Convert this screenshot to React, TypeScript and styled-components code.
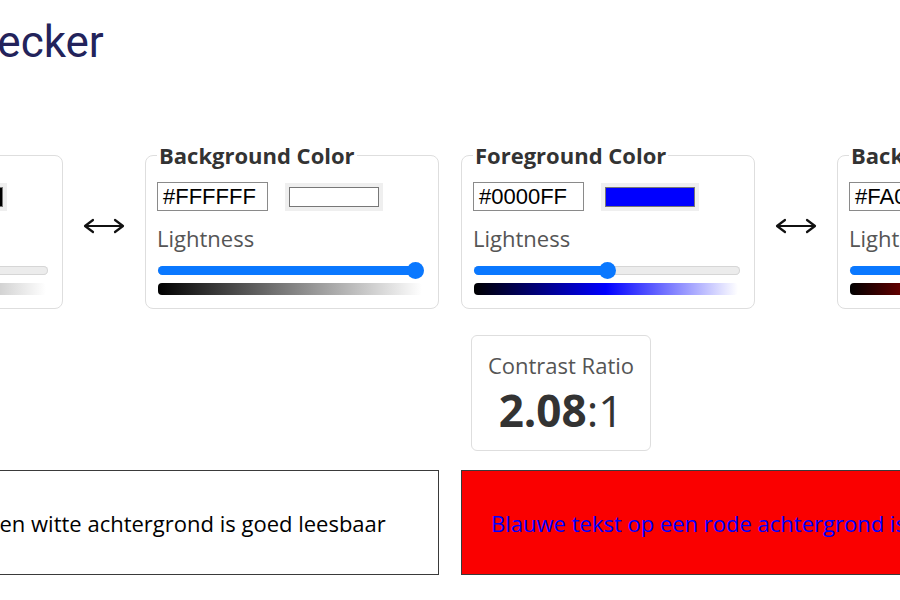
import React from "react";
import styled, { createGlobalStyle } from "styled-components";

type ColorSpec = {
  hex: string;
  hue: number;
  sat: number;
  lightness: number;
};

type Pair = {
  fg: ColorSpec;
  bg: ColorSpec;
  ratio: string;
  sample: string;
};

const pairs: Pair[] = [
  {
    fg: { hex: "#000000", hue: 0, sat: 0, lightness: 0 },
    bg: { hex: "#FFFFFF", hue: 0, sat: 0, lightness: 100 },
    ratio: "21.00",
    sample: "Zwarte tekst op een witte achtergrond is goed leesbaar",
  },
  {
    fg: { hex: "#0000FF", hue: 240, sat: 100, lightness: 50 },
    bg: { hex: "#FA0000", hue: 0, sat: 100, lightness: 49 },
    ratio: "2.08",
    sample: "Blauwe tekst op een rode achtergrond is niet goed leesbaar",
  },
];

const GlobalStyle = createGlobalStyle`
  body {
    margin: 0;
    background: #fff;
    overflow: hidden;
    font-family: "Open Sans", "Noto Sans", sans-serif;
  }
`;

const Page = styled.div`
  width: 100%;
  display: flex;
  flex-direction: column;
  align-items: center;
`;

const Inner = styled.div`
  width: 1362px;
  flex-shrink: 0;
`;

const Title = styled.h1`
  margin: 18px 0 0 -3px;
  font-family: Roboto, "Liberation Sans", sans-serif;
  font-weight: 400;
  font-size: 44px;
  line-height: 48px;
  color: #23235b;
`;

const Columns = styled.div`
  display: flex;
  gap: 22px;
  margin-top: 74px;
`;

const Column = styled.div`
  width: 670px;
  flex-shrink: 0;
  display: flex;
  flex-direction: column;
`;

const CardRow = styled.div`
  display: flex;
  align-items: center;
`;

const Card = styled.fieldset`
  width: 294px;
  box-sizing: border-box;
  margin: 0;
  padding: 0 11px 13px;
  border: 1px solid #dedede;
  border-radius: 8px;
  min-width: 0;
`;

const Legend = styled.legend`
  padding: 0 2px;
  font-size: 22px;
  font-weight: 700;
  color: #333;
  line-height: 30px;
`;

const InputRow = styled.div`
  display: flex;
  align-items: center;
  gap: 17px;
  margin-top: 12px;
`;

const HexInput = styled.div`
  width: 111px;
  height: 29px;
  box-sizing: border-box;
  border: 1px solid #8a8a8a;
  padding: 0 5px;
  font-family: "Liberation Sans", Arial, sans-serif;
  font-size: 22px;
  line-height: 27px;
  color: #000;
`;

const Swatch = styled.div<{ $color: string }>`
  width: 98px;
  height: 28px;
  box-sizing: border-box;
  padding: 4px;
  background: #efefef;

  &::after {
    content: "";
    display: block;
    height: 100%;
    box-sizing: border-box;
    border: 1px solid #777;
    background: ${(p) => p.$color};
  }
`;

const Label = styled.div`
  margin-top: 12px;
  font-size: 22px;
  line-height: 30px;
  color: #555;
`;

const Track = styled.div`
  position: relative;
  height: 9px;
  margin: 13px 3px 0 1px;
  border-radius: 5px;
  background: #ececec;
  box-shadow: inset 0 0 0 1px #d6d6d6;
`;

const Fill = styled.div`
  height: 100%;
  border-radius: 5px;
  background: #0a78ff;
`;

const Thumb = styled.div`
  position: absolute;
  top: 50%;
  width: 17px;
  height: 17px;
  margin: -8.5px 0 0 -8.5px;
  border-radius: 50%;
  background: #0a78ff;
`;

const Gradient = styled.div<{ $hue: number; $sat: number }>`
  height: 12px;
  margin: 8px 5px 0 1px;
  border-radius: 4px;
  background: linear-gradient(
    to right,
    hsl(${(p) => p.$hue}, ${(p) => p.$sat}%, 0%),
    hsl(${(p) => p.$hue}, ${(p) => p.$sat}%, 50%),
    hsl(${(p) => p.$hue}, ${(p) => p.$sat}%, 100%)
  );
`;

const Arrow = styled.div`
  width: 82px;
  flex-shrink: 0;
  display: flex;
  justify-content: center;
  align-items: center;
  padding-top: 2px;
`;

const RatioBox = styled.div`
  align-self: flex-start;
  width: 180px;
  height: 116px;
  box-sizing: border-box;
  margin: 26px 0 0 10px;
  padding-top: 14px;
  border: 1px solid #dedede;
  border-radius: 6px;
  text-align: center;
  color: #555;
`;

const RatioLabel = styled.div`
  font-size: 22px;
  line-height: 30px;
`;

const RatioValue = styled.div`
  margin-top: 2px;
  font-size: 44px;
  line-height: 56px;
  color: #333;

  b {
    font-weight: 700;
  }
`;

const Sample = styled.div<{ $fg: string; $bg: string }>`
  margin-top: 19px;
  height: 105px;
  box-sizing: border-box;
  display: flex;
  align-items: center;
  justify-content: center;
  border: 1px solid #3a3a3a;
  background: ${(p) => p.$bg};
  color: ${(p) => p.$fg};
  font-size: 22px;
  white-space: nowrap;
`;

const ArrowIcon = () => (
  <svg width="42" height="16" viewBox="0 0 42 16" fill="none">
    <path
      d="M2 8H40M10 2L2 8L10 14M32 2L40 8L32 14"
      stroke="#111"
      strokeWidth="2.2"
      strokeLinecap="round"
      strokeLinejoin="round"
    />
  </svg>
);

const ColorCard = ({ title, color }: { title: string; color: ColorSpec }) => {
  const v = color.lightness / 100;
  const pos = `calc(8.5px + ${v} * (100% - 17px))`;
  return (
    <Card>
      <Legend>{title}</Legend>
      <InputRow>
        <HexInput>{color.hex}</HexInput>
        <Swatch $color={color.hex} />
      </InputRow>
      <Label>Lightness</Label>
      <Track>
        <Fill style={{ width: pos }} />
        <Thumb style={{ left: pos }} />
      </Track>
      <Gradient $hue={color.hue} $sat={color.sat} />
    </Card>
  );
};

const App = () => (
  <Page>
    <GlobalStyle />
    <Inner>
      <Title>Contrast Checker</Title>
      <Columns>
        {pairs.map((pair) => (
          <Column key={pair.fg.hex + pair.bg.hex}>
            <CardRow>
              <ColorCard title="Foreground Color" color={pair.fg} />
              <Arrow>
                <ArrowIcon />
              </Arrow>
              <ColorCard title="Background Color" color={pair.bg} />
            </CardRow>
            <RatioBox>
              <RatioLabel>Contrast Ratio</RatioLabel>
              <RatioValue>
                <b>{pair.ratio}</b>:1
              </RatioValue>
            </RatioBox>
            <Sample $fg={pair.fg.hex} $bg={pair.bg.hex}>
              {pair.sample}
            </Sample>
          </Column>
        ))}
      </Columns>
    </Inner>
  </Page>
);

export default App;
